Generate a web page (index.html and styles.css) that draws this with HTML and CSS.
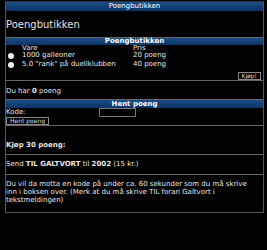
FILE: index.html
```html
<!DOCTYPE html>
<html lang="no">
<head>
  <meta charset="UTF-8">
  <title>Poengbutikken</title>
  <link rel="stylesheet" href="styles.css">
</head>
<body>
  <div class="page">
    <div class="bar">Poengbutikken</div>

    <h1 class="title">Poengbutikken</h1>

    <form class="box shop">
      <div class="bar strong">Poengbutikken</div>
      <div class="row head">
        <span class="pick"></span>
        <span class="item">Vare</span>
        <span class="price">Pris</span>
      </div>
      <label class="row">
        <span class="pick"><input type="radio" name="vare" value="1"></span>
        <span class="item">1000 galleoner</span>
        <span class="price">20 poeng</span>
      </label>
      <label class="row">
        <span class="pick"><input type="radio" name="vare" value="2"></span>
        <span class="item">5.0 "rank" på duellklubben</span>
        <span class="price">40 poeng</span>
      </label>
      <div class="actions">
        <button type="button" class="btn">Kjøp!</button>
      </div>
    </form>

    <p class="points">Du har <b>0</b> poeng</p>

    <form class="box fetch">
      <div class="bar strong">Hent poeng</div>
      <div class="code-row">
        <span class="code-label">Kode:</span>
        <input type="text" class="code-input">
      </div>
      <button type="button" class="btn">Hent poeng</button>
    </form>

    <p class="buy-title"><b>Kjøp 30 poeng:</b></p>

    <div class="box send">
      <div class="send-row">Send <b>TIL GALTVORT</b> til <b>2002</b> (15 kr.)</div>
      <div class="send-info">Du vil da motta en kode på under ca. 60 sekunder som du må skrive inn i boksen over. (Merk at du må skrive TIL foran Galtvort i tekstmeldingen)</div>
    </div>
  </div>
</body>
</html>
```

FILE: styles.css
```css
body {
  margin: 0;
  background: #000;
  color: #e6e6e6;
  font-family: "DejaVu Sans", Verdana, sans-serif;
  font-size: 7px;
  line-height: 8px;
}

.page {
  margin: 1px 0 0 5px;
  width: 259px;
  box-sizing: border-box;
  border: 1px solid #555;
  border-top-color: #333;
}

/* blue header bars */
.bar {
  height: 9px;
  line-height: 9px;
  text-align: center;
  color: #fff;
  background: linear-gradient(#1b4d86, #0b3466);
}

.bar.strong {
  font-weight: bold;
}

.title {
  margin: 8px 0 6px;
  font-size: 10px;
  line-height: 12px;
  font-weight: normal;
}

.box {
  margin: 0;
  border-top: 1px solid #666;
  border-bottom: 1px solid #666;
}

.shop .bar {
  height: 7px;
  line-height: 7px;
}

.row {
  display: flex;
  align-items: center;
  height: 9px;
  line-height: 9px;
}

.row.head {
  height: 6px;
  line-height: 6px;
}

.pick {
  width: 16px;
  display: flex;
  align-items: center;
}

.pick input {
  appearance: none;
  width: 6px;
  height: 6px;
  margin: 0 0 0 2px;
  border-radius: 50%;
  background: #f2f2f2;
  border: none;
}

.item {
  width: 111px;
}

.actions {
  height: 8px;
  padding: 3px 2px 0 0;
  text-align: right;
}

.btn {
  display: inline-block;
  vertical-align: top;
  height: 8px;
  box-sizing: border-box;
  padding: 0 3px;
  font-family: "DejaVu Sans", Verdana, sans-serif;
  font-size: 6px;
  line-height: 6px;
  color: #ddd;
  background: #000;
  border: 1px solid #888;
}

.points {
  margin: 6px 0 4px;
}

.fetch .bar {
  height: 8px;
  line-height: 8px;
}

.code-row {
  display: flex;
  align-items: center;
  height: 9px;
  line-height: 9px;
}

.code-label {
  width: 93px;
}

.code-input {
  width: 37px;
  height: 9px;
  box-sizing: border-box;
  margin: 0;
  padding: 0;
  background: #000;
  border: 1px solid #777;
}

.fetch .btn {
  display: block;
}

.buy-title {
  margin: 15px 0 5px;
}

.send {
  border-bottom: none;
}

.send-row {
  padding: 5px 0 6px;
  border-bottom: 1px solid #666;
}

.send-info {
  padding: 5px 8px 8px 0;
}
```
